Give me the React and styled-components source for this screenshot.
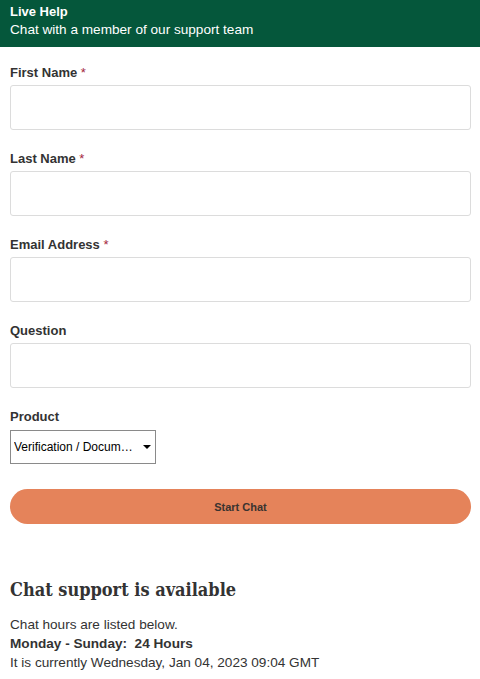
import styled, { createGlobalStyle } from 'styled-components';

const GlobalStyle = createGlobalStyle`
  html, body {
    margin: 0;
    padding: 0;
    background: #fff;
  }
  body {
    font-family: 'Liberation Sans', Arial, sans-serif;
    color: #333;
  }
  * {
    box-sizing: border-box;
  }
`;

const fields = [
  { id: 'firstName', label: 'First Name', required: true },
  { id: 'lastName', label: 'Last Name', required: true },
  { id: 'email', label: 'Email Address', required: true, type: 'email' },
  { id: 'question', label: 'Question' },
];

const App = () => {
  return (
    <>
      <GlobalStyle />
      <Header>
        <HeaderTitle>Live Help</HeaderTitle>
        <HeaderSub>Chat with a member of our support team</HeaderSub>
      </Header>

      <Form onSubmit={(e) => e.preventDefault()}>
        {fields.map((f) => (
          <Field key={f.id}>
            <Label htmlFor={f.id}>
              {f.label}
              {f.required && <Required> *</Required>}
            </Label>
            <Input id={f.id} type={f.type || 'text'} />
          </Field>
        ))}

        <Field>
          <Label htmlFor='product'>Product</Label>
          <SelectWrap>
            <Select id='product' defaultValue='verification'>
              <option value='verification'>Verification / Documents</option>
              <option value='account'>Account</option>
              <option value='billing'>Billing</option>
            </Select>
            <Caret />
          </SelectWrap>
        </Field>

        <StartButton type='submit'>Start Chat</StartButton>
      </Form>

      <Availability>
        <Heading>Chat support is available</Heading>
        <Text>Chat hours are listed below.</Text>
        <Text bold>Monday - Sunday:&nbsp; 24 Hours</Text>
        <Text>It is currently Wednesday, Jan 04, 2023 09:04 GMT</Text>
      </Availability>
    </>
  );
};
export default App;

const Header = styled.header`
  background: #05573b;
  color: #fff;
  padding: 3px 10px 8px;
  font-size: 13px;
  line-height: 18px;
`;

const HeaderTitle = styled.div`
  font-weight: 700;
`;

const HeaderSub = styled.div`
  font-weight: 400;
  font-size: 13.6px;
`;

const Form = styled.form`
  display: flex;
  flex-direction: column;
  padding: 17px 9px 0 10px;
`;

const Field = styled.div`
  display: flex;
  flex-direction: column;
  margin-bottom: 20px;
`;

const Label = styled.label`
  font-size: 13px;
  line-height: 18px;
  font-weight: 700;
  color: #333;
  margin-bottom: 3px;
`;

const Required = styled.span`
  color: #a3263d;
  font-weight: 400;
`;

const Input = styled.input`
  width: 100%;
  height: 45px;
  border: 1px solid #dcdcdc;
  border-radius: 3px;
  padding: 0 10px;
  font: inherit;
  font-size: 13px;
  outline: none;
`;

const SelectWrap = styled.div`
  position: relative;
  width: 146px;
  margin-top: 1px;
`;

const Select = styled.select`
  appearance: none;
  width: 100%;
  height: 34px;
  border: 1px solid #8a8a8a;
  border-radius: 0;
  background: #fff;
  color: #000;
  font-family: 'Liberation Sans', Arial, sans-serif;
  font-size: 12px;
  padding: 0 16px 0 3px;
  white-space: nowrap;
  overflow: hidden;
  text-overflow: ellipsis;
  outline: none;
`;

const Caret = styled.span`
  position: absolute;
  right: 5px;
  top: 15px;
  width: 0;
  height: 0;
  border-left: 4px solid transparent;
  border-right: 4px solid transparent;
  border-top: 4px solid #000;
  pointer-events: none;
`;

const StartButton = styled.button`
  margin-top: 5px;
  width: 100%;
  height: 35px;
  border: none;
  border-radius: 18px;
  background: #e5835a;
  color: #3a3330;
  font-family: 'Liberation Sans', Arial, sans-serif;
  font-size: 11px;
  font-weight: 700;
  cursor: pointer;
`;

const Availability = styled.section`
  padding: 54px 10px 10px;
`;

const Heading = styled.h2`
  margin: 0 0 13px;
  font-family: 'DejaVu Serif Condensed', 'DejaVu Serif', serif;
  font-size: 18px;
  line-height: 24px;
  font-weight: 700;
  color: #333;
`;

const Text = styled.p`
  margin: 0;
  font-size: 13.6px;
  line-height: 19px;
  font-weight: ${(p) => (p.bold ? 700 : 400)};
  color: #333;
`;
